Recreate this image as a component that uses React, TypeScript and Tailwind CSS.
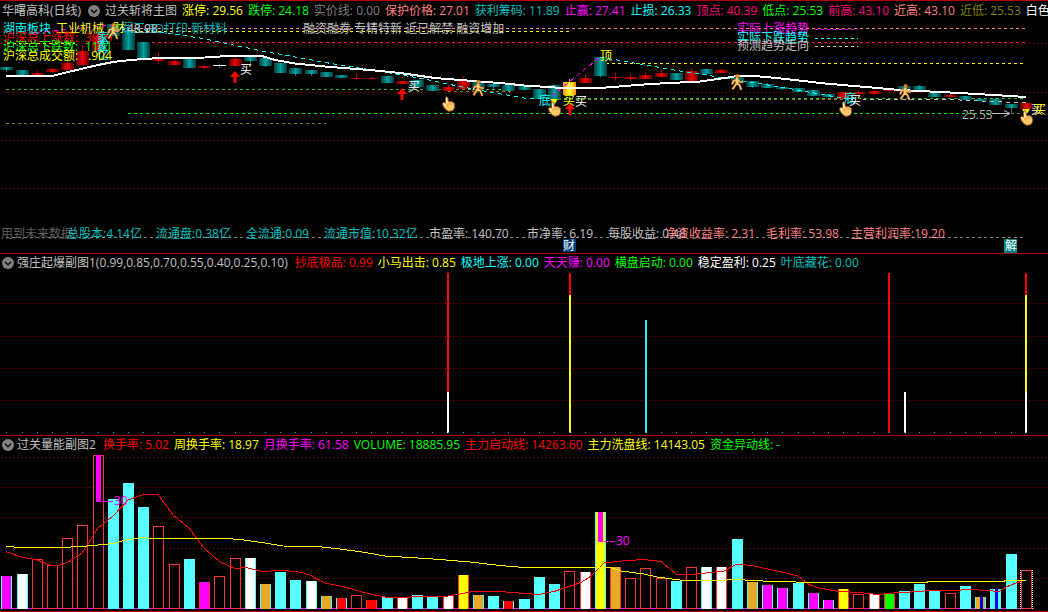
import type { ReactNode } from "react";

type Item = { label: string; color: string };

const indicatorMain: Item[] = [
  { label: "涨停: 29.56", color: "text-[#ffff00]" },
  { label: "跌停: 24.18", color: "text-[#00ff00]" },
  { label: "实价线: 0.00", color: "text-[#808080]" },
  { label: "保护价格: 27.01", color: "text-[#ff8080]" },
  { label: "获利筹码: 11.89", color: "text-[#00c0c0]" },
  { label: "止赢: 27.41", color: "text-[#ff00ff]" },
  { label: "止损: 26.33", color: "text-[#00ffff]" },
  { label: "顶点: 40.39", color: "text-[#ff0080]" },
  { label: "低点: 25.53", color: "text-[#00ff00]" },
  { label: "前高: 43.10", color: "text-[#ff0080]" },
  { label: "近高: 43.10", color: "text-[#ff8080]" },
  { label: "近低: 25.53", color: "text-[#808000]" },
  { label: "白色", color: "text-white" },
];

const indicatorBurst: Item[] = [
  { label: "抄底极品: 0.99", color: "text-[#ff0000]" },
  { label: "小马出击: 0.85", color: "text-[#ffff00]" },
  { label: "极地上涨: 0.00", color: "text-[#00ffff]" },
  { label: "天天赚: 0.00", color: "text-[#ff00ff]" },
  { label: "横盘启动: 0.00", color: "text-[#00ff00]" },
  { label: "稳定盈利: 0.25", color: "text-white" },
  { label: "叶底藏花: 0.00", color: "text-[#00c0c0]" },
];

const indicatorVolume: Item[] = [
  { label: "换手率: 5.02", color: "text-[#ff0000]" },
  { label: "周换手率: 18.97", color: "text-[#ffff00]" },
  { label: "月换手率: 61.58", color: "text-[#ff00ff]" },
  { label: "VOLUME: 18885.95", color: "text-[#00ff00]" },
  { label: "主力启动线: 14263.60", color: "text-[#ff0000]" },
  { label: "主力洗盘线: 14143.05", color: "text-[#ffff00]" },
  { label: "资金异动线: -", color: "text-[#00ff00]" },
];

const cx = (i: number) => Math.round(6.3 + 15.216 * i);

// index, kind, body top, body bottom, wick top, wick bottom
type Candle = [number, "t" | "r" | "y", number, number, number, number];
const candles: Candle[] = [
  [0, "t", 67, 70, 67, 72], [1, "t", 70, 75, 70, 75], [2, "r", 73, 75, 71, 76], [3, "r", 69, 72, 68, 73],
  [4, "r", 63, 70, 61, 70], [5, "r", 51, 65, 45, 65], [6, "r", 36, 51, 33, 51], [7, "t", 24, 36, 24, 36],
  [8, "t", 30, 50, 24, 50], [9, "t", 42, 59, 42, 59], [10, "r", 59, 61, 52, 64], [11, "r", 61, 65, 59, 65],
  [12, "t", 59, 68, 59, 68], [13, "r", 66, 68, 65, 69], [14, "t", 65, 66, 64, 68], [15, "r", 59, 66, 56, 66],
  [16, "t", 57, 61, 57, 65], [17, "t", 58, 66, 58, 67], [18, "t", 63, 73, 63, 73], [19, "t", 68, 74, 68, 76],
  [20, "t", 70, 74, 70, 76], [21, "t", 72, 77, 72, 77], [22, "t", 75, 78, 75, 78], [23, "r", 78, 79, 74, 80],
  [24, "r", 78, 79, 77, 79], [25, "t", 76, 83, 76, 83], [26, "r", 81, 84, 81, 84], [27, "t", 80, 87, 80, 87],
  [28, "t", 85, 91, 85, 91], [29, "r", 87, 91, 85, 91], [30, "r", 81, 89, 76, 89], [31, "t", 82, 88, 82, 88],
  [32, "t", 84, 87, 84, 89], [33, "t", 85, 91, 85, 91], [34, "t", 86, 90, 86, 90], [35, "t", 89, 99, 89, 99],
  [36, "t", 85, 99, 85, 99], [37, "y", 82, 95, 79, 95], [38, "r", 78, 83, 74, 83], [39, "t", 57, 76, 57, 77],
  [40, "r", 77, 78, 73, 81], [41, "r", 77, 79, 74, 81], [42, "r", 75, 79, 72, 79], [43, "r", 73, 77, 70, 77],
  [44, "t", 73, 80, 73, 80], [45, "r", 71, 83, 68, 83], [46, "t", 69, 74, 69, 76], [47, "r", 70, 73, 69, 73],
  [48, "t", 77, 83, 77, 83], [49, "t", 81, 87, 81, 88], [50, "t", 84, 88, 83, 88], [51, "t", 87, 89, 87, 90],
  [52, "t", 88, 92, 88, 92], [53, "t", 90, 96, 90, 96], [54, "t", 94, 97, 94, 97], [55, "r", 92, 99, 92, 99],
  [56, "r", 92, 94, 90, 94], [57, "r", 91, 94, 90, 95], [58, "r", 89, 91, 88, 91], [59, "t", 86, 91, 86, 91],
  [60, "t", 86, 91, 85, 92], [61, "t", 93, 97, 93, 97], [62, "r", 95, 97, 94, 97], [63, "t", 96, 100, 96, 100],
  [64, "t", 99, 101, 99, 101], [65, "t", 99, 105, 98, 105], [66, "t", 104, 108, 104, 113], [67, "r", 103, 109, 103, 110],
];

const candleFill = { t: "url(#teal)", r: "url(#red)", y: "url(#gold)" };
const wickFill = { t: "#008080", r: "#c00000", y: "#ff8000" };

const MAGENTA = "#ff00ff";
const CYAN = "#55ffff";
const RED = "#ff3232";
const ORANGE = "#e8a828";

// top, fill, edge
type Bar = [number, string, string];
const bars: Bar[] = [
  [576, MAGENTA, CYAN], [574, "#ffffff", CYAN], [559, "none", RED], [565, "none", RED],
  [538, "none", RED], [525, "none", RED], [455, "none", RED], [499, CYAN, CYAN],
  [483, CYAN, CYAN], [507, CYAN, CYAN], [526, "none", RED], [564, "none", RED],
  [559, CYAN, CYAN], [582, MAGENTA, RED], [576, "none", RED], [558, "none", RED],
  [558, "#ffffff", CYAN], [584, ORANGE, CYAN], [572, CYAN, CYAN], [580, CYAN, CYAN],
  [581, "#ffffff", CYAN], [596, ORANGE, CYAN], [598, "#ff0000", CYAN], [595, "none", RED],
  [600, "#ff0000", RED], [597, CYAN, CYAN], [597, "#ffffff", RED], [595, CYAN, CYAN],
  [596, CYAN, CYAN], [596, "#ffffff", RED], [575, "#ffff00", RED], [595, ORANGE, CYAN],
  [596, CYAN, CYAN], [601, "#ff0000", CYAN], [599, CYAN, CYAN], [577, CYAN, CYAN],
  [584, CYAN, CYAN], [571, "none", RED], [572, "#ffffff", RED], [512, "#ffff00", CYAN],
  [567, ORANGE, RED], [578, "none", RED], [568, "none", RED], [578, "none", RED],
  [581, CYAN, CYAN], [567, "none", RED], [567, "#ffffff", CYAN], [567, "#ffffff", RED],
  [539, CYAN, CYAN], [582, ORANGE, CYAN], [585, MAGENTA, CYAN], [588, MAGENTA, CYAN],
  [583, CYAN, CYAN], [593, MAGENTA, CYAN], [600, MAGENTA, CYAN], [589, "#ffff00", RED],
  [594, "none", RED], [594, "#ffffff", RED], [594, "#00ff00", RED], [591, CYAN, CYAN],
  [584, CYAN, CYAN], [591, CYAN, CYAN], [593, "none", RED], [586, CYAN, CYAN],
  [597, ORANGE, CYAN], [589, CYAN, CYAN], [554, CYAN, CYAN], [570, "none", RED],
];

function Chevron() {
  return (
    <svg className="size-3" viewBox="0 0 12 12" aria-hidden="true">
      <circle cx="6" cy="6" r="6" fill="#808080" />
      <path d="M3 4.7 6 7.7 9 4.7" fill="none" stroke="#101010" strokeWidth="1.6" />
    </svg>
  );
}

function Legend({ items }: { items: Item[] }) {
  return (
    <>
      {items.map((it) => (
        <span key={it.label} className={`shrink-0 ${it.color}`}>{it.label}</span>
      ))}
    </>
  );
}

function SubHeader({ title, items }: { title: string; items: Item[] }) {
  return (
    <header className="flex h-[18px] items-center gap-[5px] overflow-hidden pl-[2px]">
      <h2 className="flex shrink-0 items-center gap-[3px] pr-[2px]">
        <button type="button" aria-label={title} className="block"><Chevron /></button>
        {title}
      </h2>
      <Legend items={items} />
    </header>
  );
}

function Label({ x, y, c, children, end }: { x: number; y: number; c: string; children: ReactNode; end?: boolean }) {
  return (
    <text x={x} y={y + 4} fill={c} textAnchor={end ? "end" : "start"}>
      {children}
    </text>
  );
}

function Dots({ y, c = "#b00000" }: { y: number; c?: string }) {
  return <path d={`M1 ${y + 0.5}H1047`} stroke={c} strokeDasharray="1 3" fill="none" shapeRendering="crispEdges" />;
}

function Dash({ x1, x2, y, c }: { x1: number; x2: number; y: number; c: string }) {
  return <path d={`M${x1} ${y + 0.5}H${x2}`} stroke={c} strokeDasharray="3 3" fill="none" shapeRendering="crispEdges" />;
}

function Runner({ x, y }: { x: number; y: number }) {
  const limbs = "M7 4.5 6.5 9.5 3 14.5M6.8 9 9.5 11 11 15M7 5.5 3.5 7 2.5 9.5M7.5 5.5 9.5 7.8 12 8";
  return (
    <g transform={`translate(${x - 7} ${y - 8})`} fill="none" strokeLinecap="square">
      <path d={limbs} stroke="#5a2c08" strokeWidth="2.6" />
      <circle cx="7.5" cy="2" r="2.2" fill="#8a4a14" />
      <path d={limbs} stroke="#ffc060" strokeWidth="1.7" />
      <path d="M7 5v4.5" stroke="#ffc870" strokeWidth="2.6" />
      <circle cx="7.5" cy="2" r="1.5" fill="#e89030" />
    </g>
  );
}

function Hand({ x, y }: { x: number; y: number }) {
  return (
    <g transform={`translate(${x - 6} ${y - 8})`}>
      <path
        d="M3.6 1.2C4.6.4 5.7 1 5.9 2.2L6.6 5.6 9 5.4 11.2 6.2 12.6 8 12.6 11.5 11 14.4 7 15.4 4.2 14 1.4 10.8.4 8 1.6 6.2 3.6 7.2Z"
        fill="#ffc864"
        stroke="#8a4820"
        strokeWidth="0.9"
      />
      <path d="M4.6 2.2V7M1.8 7.6 4 9.6" stroke="#fff0c8" strokeWidth="1.3" />
      <path d="M8 6v2.6M10.2 6.6v2.2M4.4 9.6 6.4 8.6" stroke="#c88038" strokeWidth="0.8" fill="none" />
    </g>
  );
}

function UpArrow({ x, y }: { x: number; y: number }) {
  return <path d={`M${x} ${y}l5 6h-3.5v6h-3v-6h-3.5z`} fill="#ff0000" />;
}

function MainChart() {
  return (
    <svg className="block h-auto w-full text-[12px]" viewBox="0 20 1048 233" role="img" aria-label="过关斩将主图">
      <defs>
        <linearGradient id="teal">
          <stop offset="0" stopColor="#003c3c" /><stop offset="0.5" stopColor="#00a0a0" /><stop offset="1" stopColor="#003c3c" />
        </linearGradient>
        <linearGradient id="red">
          <stop offset="0" stopColor="#600000" /><stop offset="0.5" stopColor="#f00000" /><stop offset="1" stopColor="#600000" />
        </linearGradient>
        <linearGradient id="gold">
          <stop offset="0" stopColor="#ff9000" /><stop offset="0.5" stopColor="#ffff40" /><stop offset="1" stopColor="#ff9000" />
        </linearGradient>
      </defs>

      <Dots y={43} /><Dots y={92} /><Dots y={140} /><Dots y={188} />

      <Dash x1={128} x2={1026} y={28} c="#ff8080" />
      <Dash x1={128} x2={570} y={31} c="#ffff00" />
      <Dash x1={140} x2={1026} y={42} c="#ff0080" />
      <Dash x1={7} x2={75} y={43} c="#ffff00" />
      <Dash x1={606} x2={1024} y={63} c="#ffff00" />
      <Dash x1={6} x2={512} y={89} c="#30c030" />
      <Dash x1={448} x2={512} y={91} c="#808000" />
      <Dash x1={552} x2={1026} y={98} c="#30c030" />
      <Dash x1={552} x2={850} y={99} c="#808000" />
      <Dash x1={128} x2={1010} y={113} c="#00ff00" />
      <Dash x1={1011} x2={1026} y={113} c="#808000" />
      <Dash x1={6} x2={326} y={123} c="#808000" />
      <Dash x1={6} x2={1026} y={237} c="#808080" />
      <Dash x1={815} x2={858} y={29} c="#ff00ff" />
      <Dash x1={815} x2={858} y={38} c="#00ffff" />
      <Dash x1={815} x2={858} y={46} c="#c0c0c0" />

      <g shapeRendering="crispEdges">
        {candles.map(([i, k, top, bottom, wickTop, wickBottom]) => (
          <g key={i}>
            <rect x={cx(i)} y={wickTop} width="1" height={wickBottom - wickTop} fill={wickFill[k]} />
            <rect x={cx(i) - 6} y={top} width="13" height={Math.max(1, bottom - top)} fill={candleFill[k]} />
          </g>
        ))}
        <path d="M213 65.5h13M242 64.5h9" stroke="#ffffff" />
      </g>

      <g fill="none" strokeDasharray="4 4" shapeRendering="crispEdges">
        <path d="M30 33 112 25" stroke="#ff00ff" />
        <path d="M120 27 153 31 200 38 262 51 334 64 372 70 419 78 462 87 495 93 524 98 552 99" stroke="#00ffff" />
        <path d="M552 96 600 57" stroke="#ff00ff" />
        <path d="M600 57 674 70 731 79 786 88 836 97 850 99" stroke="#00ffff" />
        <path d="M862 99 960 100 1026 103" stroke="#c0c0c0" />
      </g>
      <path
        d="M6 76H52L68 72 98 65 113 62 130 60 160 58 205 57.500 235 55.500 250 55.500 262 56 275 60 295 63.500 330 67 370 70 400 73 435 78 460 80 480 81.500 500 83 524 85.500 555 87.500 570 88H600L625 86 650 84 700 81.500 725 78 737 76H755L786 79 825 83.500 860 86.500 900 90 950 92.500 985 94.500 1026 97"
        fill="none" stroke="#ffffff" strokeWidth="2" shapeRendering="crispEdges"
      />

      <Label x={3} y={29} c="#00ffff">湖南板块</Label>
      <Label x={56} y={29} c="#ffff00">工业机械</Label>
      <Label x={113} y={28} c="#ffff00">财</Label>
      <Label x={227} y={29} c="#00b4b4" end>军工 3D打印 新材料</Label>
      <path d="M116 29.500h10" stroke="#c0c0c0" strokeDasharray="3 3" />
      <Label x={127} y={29} c="#d0d0d0">48.98</Label>
      <Label x={3} y={38} c="#ff0000">沪深总上涨数: </Label>
      <Label x={85} y={38} c="#ff0000">3909</Label>
      <Label x={3} y={47} c="#00ff00">沪深总下跌数: </Label>
      <Label x={85} y={47} c="#00ff00">1101</Label>
      <Label x={97} y={38} c="#00ffff">家</Label>
      <Label x={97} y={47} c="#00ffff">家</Label>
      <Label x={97} y={56} c="#00ffff">亿</Label>
      <Label x={3} y={56} c="#ffff00">沪深总成交额: </Label>
      <Label x={88} y={56} c="#ffff00">.904</Label>
      <Label x={303} y={29} c="#c0c0c0">融资融券 专精特新 近已解禁 融资增加</Label>
      <Label x={737} y={29} c="#ff00ff">实际上涨趋势</Label>
      <Label x={737} y={38} c="#00ffff">实际下跌趋势</Label>
      <Label x={737} y={46} c="#c0c0c0">预测趋势走向</Label>

      <UpArrow x={235} y={71} /><UpArrow x={402} y={88} /><UpArrow x={570} y={103} />
      <Label x={240} y={70} c="#ffffff">买</Label>
      <Label x={408} y={87} c="#ffffff">买</Label>
      <Label x={539} y={101} c="#00ffff">底</Label>
      <Label x={563} y={101} c="#ffff00">买</Label>
      <Label x={575} y={102} c="#ffffff">买</Label>
      <Label x={600} y={56} c="#ffff00">顶</Label>
      <Label x={844} y={99} c="#00ffff">底</Label>
      <Label x={849} y={101} c="#ffffff">买</Label>
      <Label x={1031} y={110} c="#ffffff">买</Label>
      <Label x={1034} y={110} c="#ffff00">买</Label>
      <Label x={962} y={115} c="#b0b0b0">25.53</Label>
      <path d="M992 113.500h17M1004 110.500l6 3-6 3" stroke="#c0c0c0" fill="none" />

      <path d="M550 99h8l-4 6zM1022 109h8l-4 6z" fill="#ffff00" />
      <Runner x={113} y={31} /><Runner x={478} y={88} /><Runner x={737} y={82} /><Runner x={905} y={92} />
      <Hand x={448} y={104} /><Hand x={554} y={109} /><Hand x={845} y={109} /><Hand x={1026} y={118} />

      <Label x={1} y={234} c="#606060">用到未来数据</Label>
      <Label x={67} y={234} c="#00c0c0">总股本:4.14亿</Label>
      <Label x={156} y={234} c="#00c0c0">流通盘:0.38亿</Label>
      <Label x={246} y={234} c="#00c0c0">全流通:0.09</Label>
      <Label x={324} y={234} c="#00c0c0">流通市值:10.32亿</Label>
      <Label x={429} y={234} c="#c0c0c0">市盈率: 140.70</Label>
      <Label x={527} y={234} c="#c0c0c0">市净率: 6.19</Label>
      <Label x={608} y={234} c="#c0c0c0">每股收益: 0.48</Label>
      <Label x={665} y={234} c="#ff8080">净资收益率: 2.31</Label>
      <Label x={766} y={234} c="#ff8080">毛利率: 53.98</Label>
      <Label x={851} y={234} c="#ff8080">主营利润率:19.20</Label>
      <rect x="563" y="239" width="13" height="13" fill="#003c78" />
      <Label x={563} y={246} c="#ffffff">财</Label>
      <rect x="1004" y="239" width="13" height="14" fill="#008080" />
      <Label x={1005} y={246} c="#ffffff">解</Label>
    </svg>
  );
}

function BurstChart() {
  return (
    <svg className="block h-auto w-full" viewBox="0 272 1048 163" role="img" aria-label="强庄起爆副图1">
      {[303, 336, 368, 400].map((y) => <Dots key={y} y={y} />)}
      <g shapeRendering="crispEdges">
        <rect x="447" y="273" width="2" height="119" fill="#ff0000" />
        <rect x="447" y="392" width="2" height="41" fill="#ffffff" />
        <rect x="569" y="273" width="2" height="22" fill="#ff0000" />
        <rect x="569" y="295" width="2" height="138" fill="#ffff00" />
        <rect x="645" y="320" width="2" height="113" fill="#30e8f0" />
        <rect x="888" y="273" width="2" height="160" fill="#ff0000" />
        <rect x="904" y="392" width="2" height="41" fill="#ffffff" />
        <rect x="1025" y="273" width="2" height="22" fill="#ff0000" />
        <rect x="1025" y="295" width="2" height="97" fill="#ffff00" />
        <rect x="1025" y="392" width="2" height="41" fill="#ffffff" />
        {bars.map((_, i) => <rect key={i} x={cx(i)} y="432" width="1" height="1" fill="#00c0c0" />)}
      </g>
    </svg>
  );
}

function VolumeChart() {
  return (
    <svg className="block h-auto w-full text-[12px]" viewBox="0 454 1048 157" role="img" aria-label="过关量能副图2">
      {[457, 487, 517, 548, 578].map((y) => <Dots key={y} y={y} />)}
      <g shapeRendering="crispEdges">
        <path d="M1 608.500H1034" stroke="#ff00ff" />
        {bars.map(([top, fill, edge], i) => (
          <g key={i}>
            {fill === "none" ? (
              <rect x={cx(i) - 4.5} y={top + 0.5} width="10" height={608 - top} fill="#000000" stroke={edge} />
            ) : (
              <>
                <rect x={cx(i) - 5} y={top} width="11" height={609 - top} fill={edge} />
                <rect x={cx(i) - 4} y={top} width="9" height={609 - top} fill={fill} />
              </>
            )}
          </g>
        ))}
        <rect x="96" y="455" width="5" height="47" fill="#ff00ff" />
        <rect x="598" y="512" width="5" height="30" fill="#ff00ff" />
        <rect x="980" y="597" width="3" height="12" fill="#0000ff" />
        <rect x="995" y="589" width="3" height="20" fill="#0000ff" />
        <path d="M1020.500 570V609M1032.500 570V609" stroke="#ffffff" strokeDasharray="1 1" />
        <path d="M102 501.500h12M604 541.500h11" stroke="#ff00ff" strokeDasharray="5 1" />
      </g>
      <Label x={114} y={501} c="#ff00ff">30</Label>
      <Label x={616} y={541} c="#ff00ff">30</Label>
      <g fill="none" shapeRendering="crispEdges">
        <path
          d="M6 551.500 21 557 37 560 52 566 60 565 68 562 82 553 98 528 113 516 128 500 143 494.500H158L173 515 189 528 204 548 220 562 235 568.500 246 567.500 262 571.500 280 570.500 297 571.500 310 575 325 583 345 587 362 592 375 595 388 597.500 405 598 418 596H448L460 594 470 592 500 591.500 519 593 539 594.500 554 591.500 569 586.500 581 582.500 591 576 604 563 622 561 644 559.500 661 561.500 676 574H697L724 571 737 564 754 566 786 573 798 576 809 584.500 819 588 836 591 864 593 878 594.500 893 593 919 591.500 929 590.500H958L966 589 986 590.500 999 591.500 1006 587 1016 583 1025 580"
          stroke="#ff0000"
        />
        <path
          d="M6 546.500 21 547.500H60L82 546.500 98 545 113 543.500 128 539.500 143 537.500 151 538.500H225L240 539.500 262 542.500 283 546 318 546.500 340 549 362 552 385 556 410 557.500 440 559.500 470 562 500 565.500 524 567.500H610L621 571 644 574 657 577 684 580.500H720L735 579.500 755 580.500 770 581.500H786L806 582.500H925L930 581.500H1003L1006 580.500H1026"
          stroke="#ffff00"
        />
      </g>
    </svg>
  );
}

export default function App() {
  return (
    <main className="w-full overflow-hidden whitespace-nowrap bg-black font-['Open_Sans','Noto_Sans_CJK_SC',sans-serif] text-[12px] leading-[18px] text-[#c0c0c0]">
      <section className="border-t border-[#b00000]">
        <header className="flex h-[19px] items-center gap-[5px] overflow-hidden pl-[2px]">
          <h1 className="shrink-0 pr-[2px]">华曙高科(日线)</h1>
          <h2 className="flex shrink-0 items-center gap-[5px]">
            <button type="button" aria-label="过关斩将主图" className="block"><Chevron /></button>
            过关斩将主图
          </h2>
          <Legend items={indicatorMain} />
        </header>
        <MainChart />
      </section>
      <section className="border-t border-[#b00000]">
        <SubHeader title="强庄起爆副图1(0.99,0.85,0.70,0.55,0.40,0.25,0.10)" items={indicatorBurst} />
        <BurstChart />
      </section>
      <section className="border-y border-[#b00000]">
        <SubHeader title="过关量能副图2" items={indicatorVolume} />
        <VolumeChart />
      </section>
    </main>
  );
}
